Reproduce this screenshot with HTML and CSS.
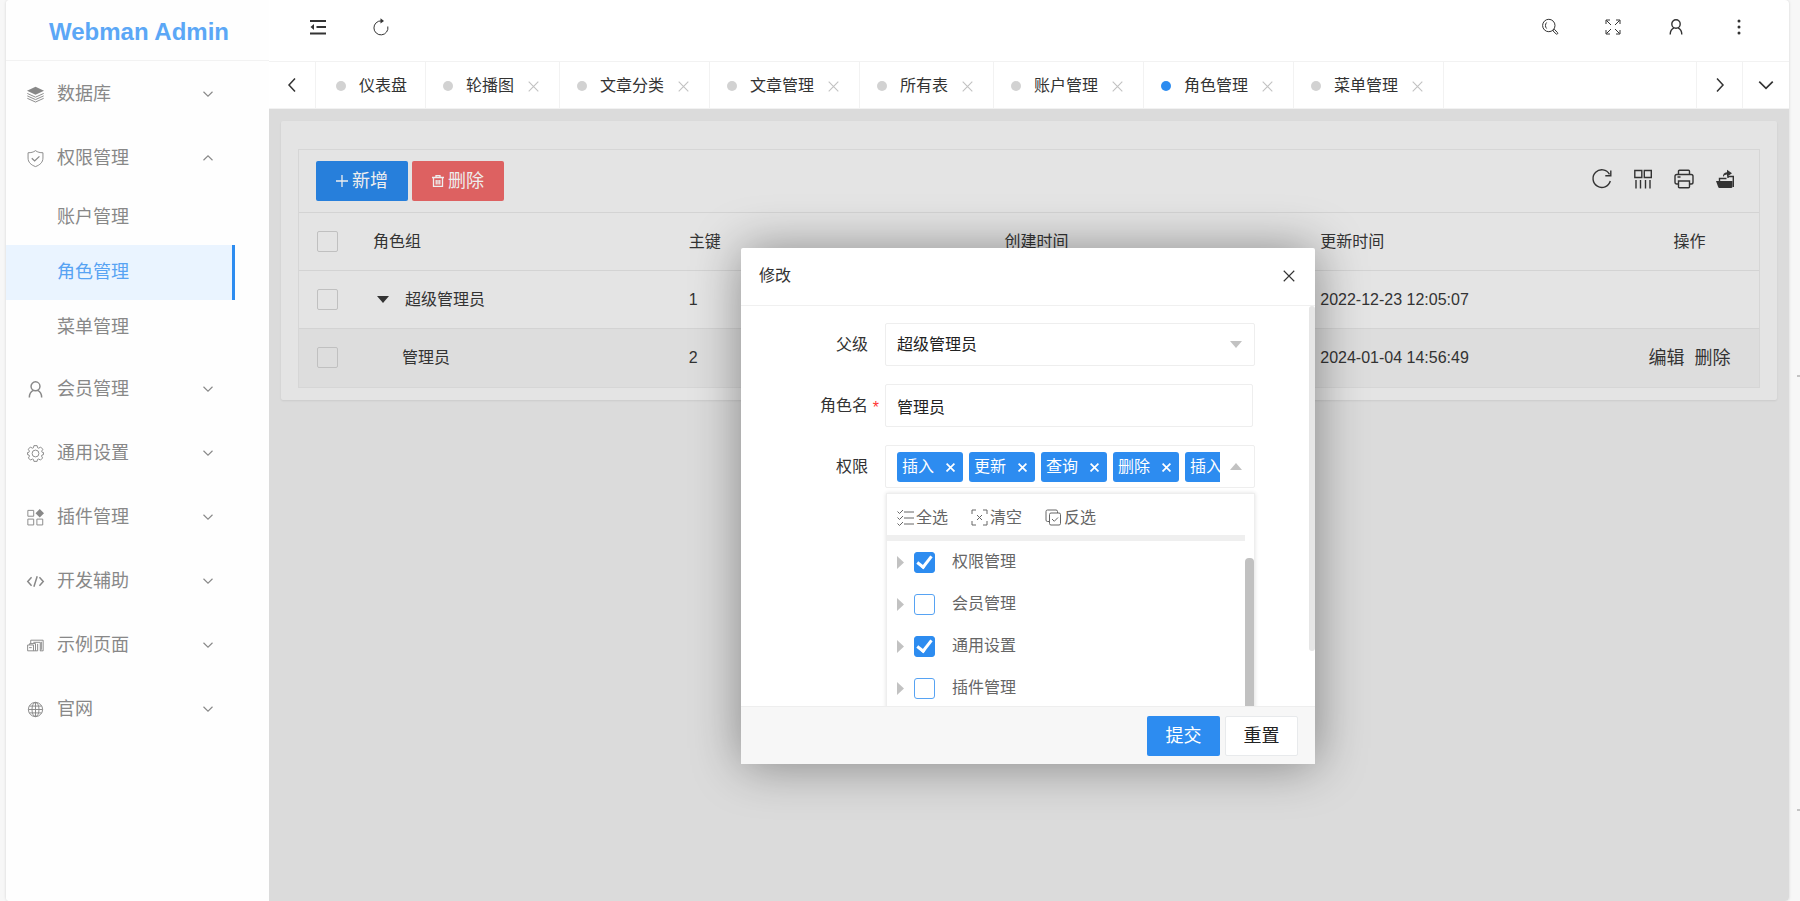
FILE: index.html
```html
<!DOCTYPE html>
<html lang="zh-CN">
<head>
<meta charset="utf-8">
<title>Webman Admin</title>
<link rel="stylesheet" href="styles.css">
</head>
<body>
<svg class="sprite" aria-hidden="true">
  <symbol id="down" viewBox="0 0 16 16"><path d="M2 5l6 6 6-6"/></symbol>
  <symbol id="up" viewBox="0 0 16 16"><path d="M2 11l6-6 6 6"/></symbol>
  <symbol id="left" viewBox="0 0 16 16"><path d="M11 1.500L5 8l6 6.500"/></symbol>
  <symbol id="right" viewBox="0 0 16 16"><path d="M5 1.500L11 8l-6 6.500"/></symbol>
  <symbol id="close" viewBox="0 0 16 16"><path d="M1 1l14 14M15 1L1 15"/></symbol>
  <symbol id="user" viewBox="0 0 16 16"><circle cx="8" cy="5" r="4.200"/><path d="M2.200 15.500c0-3.600 1.500-5.700 3.800-6.700M13.800 15.500c0-3.600-1.500-5.700-3.800-6.700"/></symbol>
</svg>
<div class="app">
  <aside class="side">
    <h1 class="logo">Webman Admin</h1>
    <nav class="menu">
      <a class="item" href="#"><svg class="ico" viewBox="0 0 16 16"><path class="solid" d="M8 .8l8 3.700-8 3.700L0 4.500z"/><path d="M.3 7L8 10.500 15.700 7M.3 9.300L8 12.800l7.700-3.500M.3 11.600L8 15.100l7.700-3.500"/></svg><span>数据库</span><svg class="chev"><use href="#down"/></svg></a>
      <a class="item" href="#"><svg class="ico" viewBox="0 0 16 16"><path d="M8 .6c2 1.500 4.300 2 7 2v5c0 4-2.800 6.500-7 8-4.200-1.500-7-4-7-8v-5c2.700 0 5-.5 7-2z"/><path class="bold" d="M4.500 7.800l2.700 2.500 4.500-4.300"/></svg><span>权限管理</span><svg class="chev"><use href="#up"/></svg></a>
      <div class="submenu">
        <a class="item sub" href="#">账户管理</a>
        <a class="item sub active" href="#" aria-current="page">角色管理</a>
        <a class="item sub" href="#">菜单管理</a>
      </div>
      <a class="item" href="#"><svg class="ico med"><use href="#user"/></svg><span>会员管理</span><svg class="chev"><use href="#down"/></svg></a>
      <a class="item" href="#"><svg class="ico" viewBox="0 0 16 16"><circle cx="8" cy="8" r="3.200"/><path d="M6.500.6h3l.5 2 1 .4 1.800-1.100 2.100 2.100L13.800 5.800l.4 1 1.300.3v2l-1.400.3-.4 1.100 1 1.700-2 2-1.700-1-1.100.4-.4 1.800h-3L6.100 13.600 5 13.200l-1.700 1-2-2 1-1.700-.4-1.100-1.400-.3v-2l1.400-.3.4-1-1.100-1.800 2-2.100L5 3l1.100-.4z"/></svg><span>通用设置</span><svg class="chev"><use href="#down"/></svg></a>
      <a class="item" href="#"><svg class="ico" viewBox="0 0 16 16"><path d="M.8 1.300h5.500v5.500H.8zM.8 9.500h5.500V15H.8zM9.300 9.500h5.500V15H9.300z"/><path class="solid" d="M12 .1L16 4l-4 4-4-4z"/></svg><span>插件管理</span><svg class="chev"><use href="#down"/></svg></a>
      <a class="item" href="#"><svg class="ico med" viewBox="0 0 16 16"><path d="M4.300 4L.7 8l3.600 4M11.700 4l3.600 4-3.600 4M9.600 3L6.500 13"/></svg><span>开发辅助</span><svg class="chev"><use href="#down"/></svg></a>
      <a class="item" href="#"><svg class="ico" viewBox="0 0 16 16"><path d="M3.500 6V3h11.700v10h-3M6 5h6.500v8M.6 7.500h5.500v5.500H.6zM2.500 7.500V6.200H8V13H6M10 6.500V13H8M13.500 4.500v7.500M2 10h2.500"/></svg><span>示例页面</span><svg class="chev"><use href="#down"/></svg></a>
      <a class="item" href="#"><svg class="ico" viewBox="0 0 16 16"><circle cx="8" cy="8" r="6.700"/><ellipse cx="8" cy="8" rx="3.300" ry="6.700"/><path d="M8 1.300v13.400M1.300 8h13.400M2.200 4.800h11.600M2.200 11.200h11.600"/></svg><span>官网</span><svg class="chev"><use href="#down"/></svg></a>
    </nav>
  </aside>

  <div class="main">
    <header class="bar">
      <button class="tool" aria-label="折叠菜单"><svg class="i18" viewBox="0 0 18 18"><path class="bar-lines" d="M1 3h16M7.500 9H17M1 15.500h16"/><path class="solid" d="M5 6v6L1.500 9z"/></svg></button>
      <button class="tool" aria-label="刷新"><svg class="i18" viewBox="0 0 18 18"><path d="M15.800 8.500A7 7 0 1 1 9.500 2.900"/><path class="solid" d="M8.500.2L12 3 8.500 5.500z"/></svg></button>
      <span class="grow"></span>
      <button class="tool" aria-label="搜索"><svg class="i18" viewBox="0 0 18 18"><circle cx="7.800" cy="7.500" r="6.200"/><path d="M5.600 4.500c-1.500 1.500-1.500 4.500 0 6"/><path d="M12.300 12l1-.8 3.300 3.500c.6.800-.5 2-1.400 1.300l-3.300-3.200z"/></svg></button>
      <button class="tool" aria-label="全屏"><svg class="i18" viewBox="0 0 18 18"><path d="M2 6V2h4M12 2h4v4M16 12v4h-4M6 16H2v-4M2.500 2.500L7 7M15.500 2.500L11 7M15.500 15.500L11 11M2.500 15.500L7 11"/></svg></button>
      <button class="tool" aria-label="用户"><svg class="i16"><use href="#user"/></svg></button>
      <button class="tool" aria-label="更多"><svg class="i18" viewBox="0 0 18 18"><g class="solid"><circle cx="9" cy="3" r="1.500"/><circle cx="9" cy="9" r="1.500"/><circle cx="9" cy="15" r="1.500"/></g></svg></button>
    </header>

    <div class="tabs">
      <button class="arrow first" aria-label="向左"><svg class="i16"><use href="#left"/></svg></button>
      <a class="tab home" href="#"><i class="dot"></i>仪表盘</a>
      <a class="tab" href="#"><i class="dot"></i>轮播图<svg class="x"><use href="#close"/></svg></a>
      <a class="tab" href="#"><i class="dot"></i>文章分类<svg class="x"><use href="#close"/></svg></a>
      <a class="tab" href="#"><i class="dot"></i>文章管理<svg class="x"><use href="#close"/></svg></a>
      <a class="tab" href="#"><i class="dot"></i>所有表<svg class="x"><use href="#close"/></svg></a>
      <a class="tab" href="#"><i class="dot"></i>账户管理<svg class="x"><use href="#close"/></svg></a>
      <a class="tab current" href="#"><i class="dot"></i>角色管理<svg class="x"><use href="#close"/></svg></a>
      <a class="tab" href="#"><i class="dot"></i>菜单管理<svg class="x"><use href="#close"/></svg></a>
      <span class="grow"></span>
      <button class="arrow" aria-label="向右"><svg class="i16"><use href="#right"/></svg></button>
      <button class="arrow last" aria-label="展开"><svg class="i18"><use href="#down"/></svg></button>
    </div>

    <main class="content">
      <section class="card">
        <div class="grid">
          <div class="actions">
            <button class="btn add"><svg class="plus" viewBox="0 0 12 12"><path d="M6 0v12M0 6h12"/></svg>新增</button>
            <button class="btn del"><svg class="plus" viewBox="0 0 12 12"><path d="M0 2.500h12M4 2V.7h4V2M1.500 3v8.300h9V3M4.200 5v4.500M6 5v4.500M7.800 5v4.500"/></svg>删除</button>
            <span class="grow"></span>
            <div class="icons">
              <button aria-label="刷新"><svg class="i20" viewBox="0 0 20 20"><path d="M18.300 12A8.800 8.800 0 1 1 17.500 5.300M18.800 1.500v5.200h-5.500"/></svg></button>
              <button aria-label="筛选列"><svg class="i20" viewBox="0 0 20 20"><path d="M1.800 1.500h7v7h-7zM11.300 1.500h7v7h-7zM3 11v8.500M7.500 11v8.500M12.500 11v8.500M17 11v8.500"/></svg></button>
              <button aria-label="打印"><svg class="i20" viewBox="0 0 20 20"><path d="M4.500 5.500V2.200q0-1 1-1h9q1 0 1 1v3.300M4.500 15H2.800Q1 15 1 13.200V7.300q0-1.800 1.800-1.800h14.400Q19 5.500 19 7.300v5.900q0 1.800-1.800 1.800h-1.700M4.500 12h11v5.800q0 1-1 1h-9q-1 0-1-1zM3.500 8h3"/></svg></button>
              <button aria-label="导出"><svg class="i20" viewBox="0 0 20 20"><path class="solid" d="M1 12h16.500v5.500q0 1.500-1.500 1.500H4.500q-1 0-1.500-1.500zM12 .8L17 4.300l-5 3.500V5.500Q9 5.300 8 8 7.500 3.700 12 3.200z"/><path d="M4.500 12V9.500h7M13 9V7.500h5.300V18"/></svg></button>
            </div>
          </div>
          <table>
            <colgroup><col class="c-check"><col><col><col><col><col class="c-ops"></colgroup>
            <thead>
              <tr><th><input type="checkbox" aria-label="全选"></th><th>角色组</th><th>主键</th><th>创建时间</th><th>更新时间</th><th class="ops">操作</th></tr>
            </thead>
            <tbody>
              <tr><td><input type="checkbox" aria-label="选择超级管理员"></td><td><span class="tree"><svg class="tri" viewBox="0 0 12 7"><path class="solid" d="M0 0h12L6 7z"/></svg>超级管理员</span></td><td>1</td><td></td><td>2022-12-23 12:05:07</td><td></td></tr>
              <tr class="hover"><td><input type="checkbox" aria-label="选择管理员"></td><td><span class="leaf">管理员</span></td><td>2</td><td></td><td>2024-01-04 14:56:49</td><td class="ops"><span class="links"><a href="#">编辑</a><a href="#">删除</a></span></td></tr>
            </tbody>
          </table>
        </div>
      </section>

      <div class="shade">
        <div class="modal" role="dialog" aria-labelledby="dlg-title">
          <div class="modal-head"><h2 id="dlg-title">修改</h2><button aria-label="关闭"><svg class="i12"><use href="#close"/></svg></button></div>
          <form class="modal-body">
            <div class="row">
              <label for="parent">父级</label>
              <div class="field">
                <select id="parent" class="box"><option>超级管理员</option></select>
                <svg class="caret" viewBox="0 0 12 7"><path class="solid" d="M0 0h12L6 7z"/></svg>
              </div>
            </div>
            <div class="row">
              <label for="role" class="required">角色名</label>
              <div class="field narrow"><input id="role" class="box" type="text" value="管理员"></div>
            </div>
            <div class="row">
              <label id="perm">权限</label>
              <div class="field" role="group" aria-labelledby="perm">
                <div class="box chips">
                  <div class="clip">
                    <span class="tag">插入<button type="button" aria-label="移除"><svg><use href="#close"/></svg></button></span>
                    <span class="tag">更新<button type="button" aria-label="移除"><svg><use href="#close"/></svg></button></span>
                    <span class="tag">查询<button type="button" aria-label="移除"><svg><use href="#close"/></svg></button></span>
                    <span class="tag">删除<button type="button" aria-label="移除"><svg><use href="#close"/></svg></button></span>
                    <span class="tag">插入<button type="button" aria-label="移除"><svg><use href="#close"/></svg></button></span>
                  </div>
                </div>
                <svg class="caret" viewBox="0 0 12 7"><path class="solid" d="M0 7h12L6 0z"/></svg>
                <div class="drop">
                  <div class="drop-tools">
                    <button type="button"><svg viewBox="0 0 17 17"><path d="M7 3h10M7 9h10M7 15h10M.5 2.500l2 2L6 1M.5 8.500l2 2L6 7M.5 14.500l2 2L6 13"/></svg>全选</button>
                    <button type="button"><svg viewBox="0 0 17 17"><path d="M1 5V1h4M12 1h4v4M16 12v4h-4M5 16H1v-4M6 6l5 5M11 6l-5 5"/></svg>清空</button>
                    <button type="button"><svg viewBox="0 0 17 17"><path d="M4.500 12.500h-2Q1 12.500 1 11V2.500Q1 1 2.500 1H11q1.500 0 1.500 1.500V4M4.500 5.500Q4.500 4 6 4h8q1.500 0 1.500 1.500v9Q15.500 16 14 16H6q-1.500 0-1.500-1.500zM7 10l2.300 2.300L13 8.500"/></svg>反选</button>
                  </div>
                  <div class="options">
                    <label class="opt"><svg class="more" viewBox="0 0 7 13"><path class="solid" d="M0 0l7 6.500L0 13z"/></svg><input type="checkbox" checked>权限管理</label>
                    <label class="opt"><svg class="more" viewBox="0 0 7 13"><path class="solid" d="M0 0l7 6.500L0 13z"/></svg><input type="checkbox">会员管理</label>
                    <label class="opt"><svg class="more" viewBox="0 0 7 13"><path class="solid" d="M0 0l7 6.500L0 13z"/></svg><input type="checkbox" checked>通用设置</label>
                    <label class="opt"><svg class="more" viewBox="0 0 7 13"><path class="solid" d="M0 0l7 6.500L0 13z"/></svg><input type="checkbox">插件管理</label>
                  </div>
                </div>
              </div>
            </div>
          </form>
          <div class="modal-foot"><button class="btn submit">提交</button><button class="btn reset">重置</button></div>
        </div>
      </div>
    </main>
  </div>
</div>
<i class="mark upper"></i><i class="mark lower"></i>
</body>
</html>
```
FILE: styles.css
```css
* { box-sizing: border-box; }
body {
  margin: 0;
  background: #f7f7f7;
  color: #333;
  font: 16px/24px "Liberation Sans", "Noto Sans CJK SC", sans-serif;
  overflow: hidden;
}
a { color: inherit; text-decoration: none; }
button { margin: 0; padding: 0; border: 0; background: none; color: inherit; font: inherit; }
svg { display: block; flex: none; fill: none; stroke: currentColor; stroke-width: 1; overflow: visible; }
.solid { fill: currentColor; stroke: none; }
.sprite { position: absolute; width: 0; height: 0; }
.grow { flex: 1; }
.i12 { width: 12px; height: 12px; }
.i16 { width: 16px; height: 16px; }
.i18 { width: 18px; height: 18px; }
.i20 { width: 20px; height: 20px; }

.app {
  display: flex;
  height: 100vh;
  margin: 0 11px 0 6px;
  border-radius: 4px;
  overflow: hidden;
  background: #fff;
  box-shadow: 0 0 3px rgba(0, 0, 0, .15);
}

/* Sidebar */
.side { flex: none; width: 263px; background: #fefefe; }
.logo {
  height: 61px;
  margin: 0;
  padding-top: 4px;
  padding-left: 3px;
  border-bottom: 1px solid #f2f2f2;
  color: #5ba7f6;
  font-size: 24px;
  line-height: 56px;
  text-align: center;
}
.menu { width: 229px; padding-top: 1px; font-size: 18px; color: #888; }
.item { display: flex; align-items: center; height: 64px; padding: 0 21px; }
.item span { flex: 1; margin-left: 13px; }
.ico { width: 17px; height: 17px; stroke-width: .9; }
.ico .bold { stroke-width: 1.200; }
.med { stroke-width: 1.400; }
.chev { width: 12px; height: 12px; stroke-width: 1.500; }
.submenu { padding-bottom: 2px; }
.sub { height: 55px; padding: 0 0 2px 51px; }
.active { border-right: 3px solid #2d8cf0; background: #eaf4ff; color: #57a3f3; }

/* Header and tabs */
.main { flex: 1; min-width: 0; display: flex; flex-direction: column; }
.bar { flex: none; display: flex; height: 61px; padding: 0 19px 7px 17px; }
.tool { display: grid; place-items: center; width: 63px; }
.bar-lines { stroke-width: 2; }
.tool .i16 { stroke-width: 1.400; }
.tabs { flex: none; display: flex; height: 48px; border: solid #f2f2f2; border-width: 1px 0; background: #fff; }
.arrow { display: grid; place-items: center; width: 46px; border-left: 1px solid #f2f2f2; }
.arrow svg { stroke-width: 1.500; }
.arrow.first { width: 47px; border-left: 0; border-right: 1px solid #f2f2f2; }
.arrow.last { width: 47px; }
.tab { display: flex; align-items: center; padding: 2px 20px 0 17px; border-right: 1px solid #f2f2f2; white-space: nowrap; }
.tab.home { padding-left: 20px; padding-right: 18px; }
.dot { width: 10px; height: 10px; margin-right: 13px; border-radius: 50%; background: #d2d2d2; }
.current .dot { background: #2d8cf0; }
.x { width: 11px; height: 11px; margin-left: 14px; color: #c2c2c2; stroke-width: 1.600; }

/* Table card */
.content { position: relative; flex: 1; padding: 12px; background: #dbdbdb; }
.card { padding: 28px 17px 12px; border-radius: 2px; background: #e4e4e4; box-shadow: 0 1px 2px rgba(0, 0, 0, .08); }
.grid { border: 1px solid #d6d6d6; }
.actions { display: flex; align-items: center; gap: 4px; height: 62px; padding: 0 17px; }
.btn { display: flex; align-items: center; justify-content: center; height: 40px; border-radius: 2px; color: #fff; font-size: 18px; }
.add, .del { width: 92px; gap: 4px; color: #eee; }
.add { background: #277fdb; }
.del { background: #dd6161; }
.plus { width: 12px; height: 12px; stroke-width: 1.300; }
.icons { display: flex; gap: 21px; padding: 0 7px 4px 0; }
.icons svg { stroke-width: 1.400; }
table { width: 100%; border-collapse: collapse; table-layout: fixed; }
.c-check { width: 58px; }
.c-ops { width: 139px; }
th, td { height: 58px; padding: 0 16px; border-top: 1px solid #d3d3d3; text-align: left; font-weight: 400; }
th:first-child, td:first-child { padding-left: 18px; }
.ops { text-align: center; }
.hover { background: #dddddd; }
input[type="checkbox"] { display: block; appearance: none; width: 21px; height: 21px; margin: 0; border: 1px solid #c0c0c0; border-radius: 2px; }
.tree { display: flex; align-items: center; padding-left: 4px; gap: 16px; }
.tri { width: 12px; height: 7px; }
.leaf { padding-left: 29px; }
.links { display: flex; justify-content: center; gap: 10px; font-size: 18px; }

/* Dialog */
.shade { position: absolute; inset: 0; display: grid; place-items: center; padding: 2px 2px 0 0; }
.modal {
  width: 574px;
  max-width: 90%;
  border-radius: 2px;
  background: #fff;
  box-shadow: 1px 1px 50px rgba(0, 0, 0, .4);
}
.modal-head { display: flex; align-items: center; justify-content: space-between; height: 58px; padding: 0 20px 2px 18px; border-bottom: 1px solid #f0f0f0; }
.modal-head h2 { margin: 0; font-size: 16px; font-weight: 400; }
.modal-head svg { stroke-width: 1.500; }
.modal-body { position: relative; display: grid; gap: 18px; align-content: start; height: 400px; padding: 17px 60px 0 18px; overflow: hidden; }
.modal-body::after { content: ""; position: absolute; top: 0; right: 0; width: 6px; height: 345px; border-radius: 3px; background: #e6e6e6; }
.row { display: flex; align-items: center; }
.row > label { position: relative; width: 126px; padding-right: 17px; text-align: right; }
.required::after { content: "*"; position: absolute; right: 6px; top: 2px; color: #f33; }
.field { position: relative; flex: 1; min-width: 0; }
.narrow { margin-right: 2px; }
.box { display: block; width: 100%; height: 43px; margin: 0; padding: 0 11px; border: 1px solid #eee; border-radius: 2px; background: #fff; color: #222; font: inherit; appearance: none; outline: 0; }
.caret { position: absolute; top: 18px; right: 13px; width: 12px; height: 7px; color: #c2c2c2; }
.chips { padding: 6px 34px 6px 11px; }
.clip { display: flex; gap: 6px; overflow: hidden; }
.tag { flex: none; display: flex; align-items: center; gap: 12px; height: 30px; padding: 0 8px 0 5px; border-radius: 3px; background: #2d8cf0; color: #fff; }
.tag svg { width: 9px; height: 9px; stroke-width: 3; }
.drop { position: absolute; top: 48px; left: 1px; right: 0; height: 260px; border: 1px solid #eee; background: #fff; box-shadow: 0 0 4px rgba(0, 0, 0, .12); color: #666; }
.drop::after { content: ""; position: absolute; top: 64px; right: 0; width: 9px; height: 200px; border-radius: 4px; background: #c1c1c1; }
.drop-tools { display: flex; gap: 23px; height: 47px; margin-right: 9px; padding: 0 10px; border-bottom: 6px solid #efefef; }
.drop-tools button { display: flex; align-items: center; gap: 2px; padding-top: 6px; }
.drop-tools svg { width: 17px; height: 17px; }
.opt { display: flex; align-items: center; height: 42px; padding-left: 10px; }
.more { width: 7px; height: 13px; margin-right: 10px; color: #c2c2c2; }
.opt input[type="checkbox"] { margin-right: 17px; border-color: #57a3f3; border-radius: 3px; background: #fff; }
.opt input[type="checkbox"]:checked { background: #2d8cf0; border-color: #2d8cf0; display: grid; place-items: center; }
.opt input:checked::after { content: ""; width: 6px; height: 12px; margin-top: -3px; border: solid #fff; border-width: 0 3px 3px 0; transform: rotate(38deg); }
.modal-foot { display: flex; align-items: center; justify-content: flex-end; gap: 5px; height: 58px; padding: 0 17px; border-top: 1px solid #eee; background: #f7f7f7; }
.submit, .reset { width: 73px; }
.submit { background: #2d8cf0; }
.reset { border: 1px solid #e8eaec; background: #fff; color: #222; }

/* Scroll marks on the window edge */
.mark { position: absolute; right: 0; width: 3px; height: 2px; background: #c4c4c4; }
.upper { top: 375px; }
.lower { top: 809px; }
```
